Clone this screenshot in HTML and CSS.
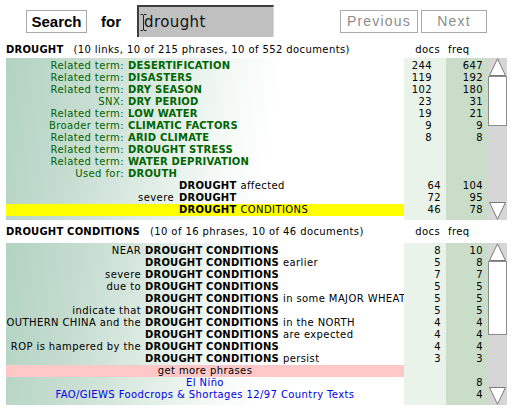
FILE: index.html
```html
<!DOCTYPE html>
<html>
<head>
<meta charset="utf-8">
<title>Thesaurus search</title>
<link rel="stylesheet" href="styles.css">
</head>
<body>
<div class="page">
  <div class="topbar">
    <div class="btn btn-search">Search</div>
    <span class="for">for</span>
    <div class="input">
      <svg class="ibeam" width="7" height="19" viewBox="0 0 7 19"><path d="M0.5 1.5 H3 M4 1.5 H6.5 M3.5 2 V17 M0.5 17.5 H3 M4 17.5 H6.5" stroke="#222" stroke-width="1" fill="none"/></svg>
      <span class="qtext">drought</span>
    </div>
    <div class="btn btn-nav btn-prev">Previous</div>
    <div class="btn btn-nav btn-next">Next</div>
  </div>

  <section class="panel p1">
    <div class="phead">
      <div class="ptitle"><b>DROUGHT</b><span class="pinfo">(10 links, 10 of 215 phrases, 10 of 552 documents)</span></div>
      <div class="hcell hdocs">docs</div>
      <div class="hcell hfreq">freq</div>
      <div class="hsb"></div>
    </div>
    <div class="pbody">
      <div class="rows">
        <div class="row thes"><div class="main"><span class="lab">Related term:</span><span class="term">DESERTIFICATION</span></div><div class="n docs">244</div><div class="n freq">647</div></div>
        <div class="row thes"><div class="main"><span class="lab">Related term:</span><span class="term">DISASTERS</span></div><div class="n docs">119</div><div class="n freq">192</div></div>
        <div class="row thes"><div class="main"><span class="lab">Related term:</span><span class="term">DRY SEASON</span></div><div class="n docs">102</div><div class="n freq">180</div></div>
        <div class="row thes"><div class="main"><span class="lab">SNX:</span><span class="term">DRY PERIOD</span></div><div class="n docs">23</div><div class="n freq">31</div></div>
        <div class="row thes"><div class="main"><span class="lab">Related term:</span><span class="term">LOW WATER</span></div><div class="n docs">19</div><div class="n freq">21</div></div>
        <div class="row thes"><div class="main"><span class="lab">Broader term:</span><span class="term">CLIMATIC FACTORS</span></div><div class="n docs">9</div><div class="n freq">9</div></div>
        <div class="row thes"><div class="main"><span class="lab">Related term:</span><span class="term">ARID CLIMATE</span></div><div class="n docs">8</div><div class="n freq">8</div></div>
        <div class="row thes"><div class="main"><span class="lab">Related term:</span><span class="term">DROUGHT STRESS</span></div><div class="n docs"></div><div class="n freq"></div></div>
        <div class="row thes"><div class="main"><span class="lab">Related term:</span><span class="term">WATER DEPRIVATION</span></div><div class="n docs"></div><div class="n freq"></div></div>
        <div class="row thes"><div class="main"><span class="lab">Used for:</span><span class="term">DROUTH</span></div><div class="n docs"></div><div class="n freq"></div></div>
        <div class="row ph"><div class="main"><span class="l"></span><span class="kw">DROUGHT</span><span class="r">affected</span></div><div class="n docs">64</div><div class="n freq">104</div></div>
        <div class="row ph"><div class="main"><span class="l">severe</span><span class="kw">DROUGHT</span><span class="r"></span></div><div class="n docs">72</div><div class="n freq">95</div></div>
        <div class="row ph"><div class="main hl"><span class="l"></span><span class="kw">DROUGHT</span><span class="r">CONDITIONS</span></div><div class="n docs">46</div><div class="n freq">78</div></div>
      </div>
      <div class="sb">
        <svg class="arr" width="19" height="18" viewBox="0 0 19 18"><polygon points="1.5,17.5 9.5,0.8 17.5,17.5" fill="#fff" stroke="#7a7a7a" stroke-width="1"/></svg>
        <div class="track"><div class="thumb thumb-a"></div></div>
        <svg class="arr" width="19" height="18" viewBox="0 0 19 18"><polygon points="1.5,0.5 9.5,17.2 17.5,0.5" fill="#fff" stroke="#7a7a7a" stroke-width="1"/></svg>
      </div>
    </div>
  </section>

  <section class="panel p2">
    <div class="phead">
      <div class="ptitle"><b>DROUGHT CONDITIONS</b><span class="pinfo">(10 of 16 phrases, 10 of 46 documents)</span></div>
      <div class="hcell hdocs">docs</div>
      <div class="hcell hfreq">freq</div>
      <div class="hsb"></div>
    </div>
    <div class="pbody">
      <div class="rows">
        <div class="row ph"><div class="main"><span class="l">NEAR</span><span class="kw">DROUGHT CONDITIONS</span><span class="r"></span></div><div class="n docs">8</div><div class="n freq">10</div></div>
        <div class="row ph"><div class="main"><span class="l"></span><span class="kw">DROUGHT CONDITIONS</span><span class="r">earlier</span></div><div class="n docs">5</div><div class="n freq">8</div></div>
        <div class="row ph"><div class="main"><span class="l">severe</span><span class="kw">DROUGHT CONDITIONS</span><span class="r"></span></div><div class="n docs">7</div><div class="n freq">7</div></div>
        <div class="row ph"><div class="main"><span class="l">due to</span><span class="kw">DROUGHT CONDITIONS</span><span class="r"></span></div><div class="n docs">5</div><div class="n freq">5</div></div>
        <div class="row ph"><div class="main"><span class="l"></span><span class="kw">DROUGHT CONDITIONS</span><span class="r">in some MAJOR WHEAT</span></div><div class="n docs">5</div><div class="n freq">5</div></div>
        <div class="row ph"><div class="main"><span class="l">indicate that</span><span class="kw">DROUGHT CONDITIONS</span><span class="r"></span></div><div class="n docs">5</div><div class="n freq">5</div></div>
        <div class="row ph"><div class="main"><span class="l">OUTHERN CHINA and the</span><span class="kw">DROUGHT CONDITIONS</span><span class="r">in the NORTH</span></div><div class="n docs">4</div><div class="n freq">4</div></div>
        <div class="row ph"><div class="main"><span class="l"></span><span class="kw">DROUGHT CONDITIONS</span><span class="r">are expected</span></div><div class="n docs">4</div><div class="n freq">4</div></div>
        <div class="row ph"><div class="main"><span class="l">ROP is hampered by the</span><span class="kw">DROUGHT CONDITIONS</span><span class="r"></span></div><div class="n docs">4</div><div class="n freq">4</div></div>
        <div class="row ph"><div class="main"><span class="l"></span><span class="kw">DROUGHT CONDITIONS</span><span class="r">persist</span></div><div class="n docs">3</div><div class="n freq">3</div></div>
        <div class="row"><div class="main more">get more phrases</div><div class="n docs"></div><div class="n freq"></div></div>
        <div class="row"><div class="main link">El Niño</div><div class="n docs"></div><div class="n freq">8</div></div>
        <div class="row"><div class="main link">FAO/GIEWS Foodcrops &amp; Shortages 12/97 Country Texts</div><div class="n docs"></div><div class="n freq">4</div></div>
      </div>
      <div class="sb">
        <svg class="arr" width="19" height="18" viewBox="0 0 19 18"><polygon points="1.5,17.5 9.5,0.8 17.5,17.5" fill="#fff" stroke="#7a7a7a" stroke-width="1"/></svg>
        <div class="track"><div class="thumb thumb-b"></div></div>
        <svg class="arr" width="19" height="18" viewBox="0 0 19 18"><polygon points="1.5,0.5 9.5,17.2 17.5,0.5" fill="#fff" stroke="#7a7a7a" stroke-width="1"/></svg>
      </div>
    </div>
  </section>
</div>
</body>
</html>
```
FILE: styles.css
```css
* { box-sizing: border-box; }
html, body { margin: 0; padding: 0; background: #fff; }
body {
  font-family: "DejaVu Sans", Verdana, sans-serif;
  font-size: 10px;
  letter-spacing: 0.4px;
  color: #000;
  width: 512px;
  height: 411px;
  overflow: hidden;
}
.page { padding: 0 0 0 6px; }

/* top bar */
.topbar { display: flex; align-items: center; height: 42px; }
.btn {
  background: #fff;
  border: 1px solid #a9a9a9;
  display: flex;
  align-items: center;
  justify-content: center;
  height: 23px;
}
.btn-search {
  margin-left: 20px;
  width: 61px;
  font-family: "Liberation Sans", Arial, sans-serif;
  font-weight: bold;
  font-size: 15px;
  letter-spacing: 0;
}
.for {
  margin-left: 14px;
  font-family: "Liberation Sans", Arial, sans-serif;
  font-weight: bold;
  font-size: 15px;
  letter-spacing: 0;
}
.input {
  position: relative;
  margin-left: 16px;
  width: 137px;
  height: 32px;
  background: #c0c0c0;
  border-top: 2px solid #3e3e3e;
  border-left: 2px solid #3e3e3e;
  border-right: 1px solid #d8d8d8;
  display: flex;
  align-items: center;
  padding-left: 5px;
}
.qtext { font-size: 15px; letter-spacing: 0.4px; color: #111; }
.ibeam { position: absolute; left: 1px; top: 6px; }
.btn-nav {
  font-family: "Liberation Sans", Arial, sans-serif;
  font-size: 14px;
  letter-spacing: 1.2px;
  color: #8c8c8c;
}
.btn-prev { margin-left: 66px; width: 78px; }
.btn-next { margin-left: 3px; width: 66px; }

/* panels */
.phead { display: flex; height: 16px; line-height: 16px; }
.p2 { margin-top: 4px; }
.p2 .phead { height: 19px; padding-bottom: 3px; }
.ptitle { width: 398px; white-space: nowrap; overflow: hidden; }
.ptitle b { font-weight: bold; letter-spacing: 0.2px; }
.pinfo { margin-left: 10px; }
.hcell { width: 42px; }
.hdocs { text-align: right; padding-right: 6px; }
.hfreq { padding-left: 2px; }
.hsb { width: 19px; }

.pbody { display: flex; height: 162px; }
.rows {
  width: 482px;
  padding: 2px 0 4px;
  background:
    linear-gradient(#c9ddc9, #c9ddc9) 440px 0 / 42px 100% no-repeat,
    linear-gradient(#e9f3e9, #e9f3e9) 398px 0 / 42px 100% no-repeat,
    linear-gradient(100deg, #b2d3c2 0%, #c4dccf 18%, #dcebe2 36%, #f4f9f6 54%, #ffffff 66%) 0 0 / 398px 100% no-repeat;
}
.row { display: flex; height: 12px; line-height: 12px; }
.main {
  width: 398px;
  flex: none;
  display: flex;
  overflow: hidden;
  white-space: nowrap;
}
.n { width: 42px; flex: none; text-align: right; padding-right: 5px; }
.thes .docs { padding-right: 14px; }

.lab { width: 118px; flex: none; text-align: right; color: #006400; }
.term { margin-left: 4px; font-weight: bold; color: #006400; letter-spacing: 0.2px; }

.l { flex: none; text-align: right; overflow: hidden; }
.p1 .l { width: 168px; }
.p1 .kw { margin-left: 5px; }
.p2 .l { width: 135px; }
.p2 .kw { margin-left: 4px; }
.kw { font-weight: bold; letter-spacing: 0.2px; }
.r { margin-left: 4px; }
.hl { background: #ffff00; }
.more { background: #ffc8c8; justify-content: center; }
.link { justify-content: center; color: #0000e6; }

/* scrollbar */
.sb {
  width: 19px;
  background: #d6d6d6;
  display: flex;
  flex-direction: column;
}
.arr { display: block; flex: none; }
.track { flex: 1; }
.thumb { background: #fff; border: 1px solid #8c8c8c; }
.thumb-a { height: 50px; }
.thumb-b { height: 74px; }
```
